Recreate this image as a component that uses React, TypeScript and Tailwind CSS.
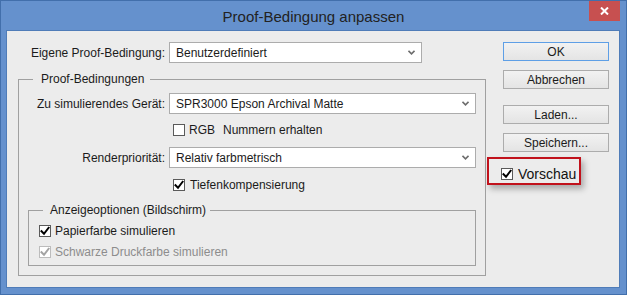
import React from 'react';

function Check({ checked = false, disabled = false }: { checked?: boolean; disabled?: boolean }) {
  return (
    <span
      className={`w-[12px] h-[12px] shrink-0 bg-white border flex items-center justify-center ${
        disabled ? 'border-[#bcbcbc]' : 'border-[#5a5a5a]'
      }`}
    >
      {checked && (
        <svg width="10" height="10" viewBox="0 0 10 10" fill="none">
          <path
            d="M1.5 5.2 L4 7.8 L8.6 1.8"
            stroke={disabled ? '#a3a3a3' : '#000'}
            strokeWidth="2"
            strokeLinecap="square"
          />
        </svg>
      )}
    </span>
  );
}

function Select({ value, width }: { value: string; width: string }) {
  return (
    <div className={`${width} h-[21px] ml-[4px] bg-white border border-[#acacac] flex items-center justify-between pl-[6px] pr-[6px]`}>
      <span>{value}</span>
      <svg width="7" height="5" viewBox="0 0 7 5" fill="none">
        <path d="M0.5 0.8 L3.5 3.8 L6.5 0.8" stroke="#6d6d6d" strokeWidth="1.6" />
      </svg>
    </div>
  );
}

function Btn({ label, primary = false, className = '' }: { label: string; primary?: boolean; className?: string }) {
  return (
    <button
      className={`w-[106px] h-[19px] flex items-center justify-center bg-linear-to-b from-[#f2f2f2] to-[#e4e4e4] border ${
        primary ? 'border-[#5e9fe6]' : 'border-[#acacac]'
      } ${className}`}
    >
      {label}
    </button>
  );
}

export default function App() {
  return (
    <div className="w-[627px] h-[295px] bg-[#6591cd] border border-[#426fab] flex flex-col font-['Liberation_Sans',Arial,sans-serif] text-[12px] leading-[14px] text-[#1b1b1b]">
      {/* title bar */}
      <div className="relative h-[30px] shrink-0 flex items-center justify-center">
        <span className="text-[15px] text-[#222] pt-[1px]">Proof-Bedingung anpassen</span>
        <div className="absolute top-0 right-[6px] w-[31px] h-[20px] bg-[#c75050] flex items-center justify-center">
          <svg width="9" height="8" viewBox="0 0 9 8" fill="none">
            <path d="M1 0.5 L8 7.5 M8 0.5 L1 7.5" stroke="#fff" strokeWidth="2" />
          </svg>
        </div>
      </div>

      {/* client area */}
      <div className="ml-[6px] w-[612px] h-[256px] bg-[#ececec] ring-1 ring-[#4f7cb8] flex pt-[11px]">
        {/* left column */}
        <div className="w-[480px] flex flex-col">
          <div className="flex h-[21px] items-center">
            <span className="w-[158px] text-right">Eigene Proof-Bedingung:</span>
            <Select value="Benutzerdefiniert" width="w-[253px]" />
          </div>

          <fieldset className="mt-[9px] ml-[11px] w-[468px] border border-[#a0a0a0] pt-[7px] pb-[9px]">
            <legend className="ml-[14px] pl-[8px] pr-[6px] leading-[14px]">Proof-Bedingungen</legend>

            <div className="flex h-[21px] items-center">
              <span className="w-[146px] text-right">Zu simulierendes Gerät:</span>
              <Select value="SPR3000 Epson Archival Matte" width="w-[307px]" />
            </div>

            <div className="mt-[9px] ml-[154px] flex items-center gap-[4px] h-[14px]">
              <Check />
              <span>RGB</span>
              <span className="ml-[4px]">Nummern erhalten</span>
            </div>

            <div className="mt-[10px] flex h-[21px] items-center">
              <span className="w-[146px] text-right">Renderpriorität:</span>
              <Select value="Relativ farbmetrisch" width="w-[307px]" />
            </div>

            <div className="mt-[10px] ml-[154px] flex items-center gap-[5px] h-[14px]">
              <Check checked />
              <span>Tiefenkompensierung</span>
            </div>

            <fieldset className="mt-[11px] ml-[9px] w-[448px] border border-[#a0a0a0] pt-[7px] pb-[6px]">
              <legend className="ml-[14px] pl-[7px] pr-[4px] leading-[14px]">Anzeigeoptionen (Bildschirm)</legend>
              <div className="ml-[10px] flex items-center gap-[4px] h-[14px]">
                <Check checked />
                <span>Papierfarbe simulieren</span>
              </div>
              <div className="mt-[7px] ml-[10px] flex items-center gap-[4px] h-[14px]">
                <Check checked disabled />
                <span className="text-[#8d8d8d]">Schwarze Druckfarbe simulieren</span>
              </div>
            </fieldset>
          </fieldset>
        </div>

        {/* right column */}
        <div className="flex flex-col">
          <Btn label="OK" primary className="ml-[16px]" />
          <Btn label="Abbrechen" className="ml-[16px] mt-[9px]" />
          <Btn label="Laden..." className="ml-[16px] mt-[16px]" />
          <Btn label="Speichern..." className="ml-[16px] mt-[9px]" />

          <div className="mt-[5px] w-[94px] h-[28px] border-2 border-[#c1121c] shadow-[3px_4px_6px_rgba(0,0,0,0.28)] flex items-center gap-[5px] pl-[12px] pt-[6px]">
            <Check checked />
            <span className="text-[14px] text-[#111]">Vorschau</span>
          </div>
        </div>
      </div>
    </div>
  );
}
